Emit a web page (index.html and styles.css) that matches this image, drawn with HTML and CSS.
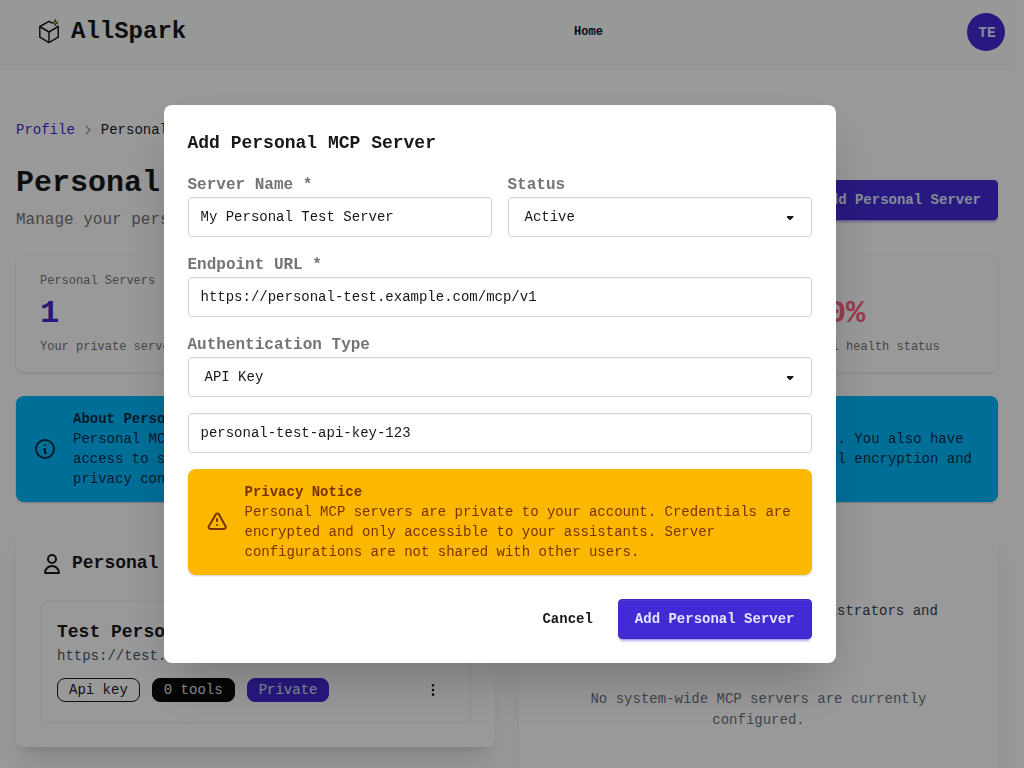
FILE: index.html
```html
<!DOCTYPE html>
<html lang="en">
<head>
<meta charset="utf-8">
<title>AllSpark</title>
<link rel="stylesheet" href="styles.css">
</head>
<body>
<div class="page">
  <header class="navbar">
    <div class="brand">
      <svg class="brand-icon" viewBox="0 0 24 26" fill="none" stroke="#18181b" stroke-width="1.5" stroke-linejoin="round" stroke-linecap="round">
        <path d="M15 4 12 2.4 2.8 7.5v10.7l9.2 5.4 9.2-5.4V7.5l-.6-.4M2.8 7.5 12 13l9.2-5.5M12 13v10.6"/>
        <path d="M18.3 0.9l.8 2 2 .8-2 .8-.8 2.2-.8-2.2-2.2-.8 2.2-.8z" fill="#fbbf24" stroke-width=".8"/>
        <path d="M21.2 1.7l.4-.4" stroke="#f59e0b" stroke-width="1"/>
      </svg>
      <span>AllSpark</span>
    </div>
    <nav class="nav-links"><a>Home</a></nav>
    <div class="nav-end"><div class="avatar">TE</div></div>
  </header>

  <main class="content">
    <div class="breadcrumbs"><a>Profile</a><svg viewBox="0 0 8 10" fill="none" stroke="#18181b" stroke-opacity=".45" stroke-width="1.3"><path d="M2 1 6 5 2 9"/></svg><span>Personal MCP</span></div>

    <div class="page-head">
      <div>
        <h1>Personal MCP</h1>
        <p>Manage your personal MCP servers</p>
      </div>
      <button class="btn btn-primary">Add Personal Server</button>
    </div>

    <div class="stats">
      <div class="stat"><div class="stat-title">Personal Servers</div><div class="stat-value primary">1</div><div class="stat-desc">Your private servers</div></div>
      <div class="stat"><div class="stat-title">System Servers</div><div class="stat-value">0</div><div class="stat-desc">Available to you</div></div>
      <div class="stat"><div class="stat-title">Total Tools</div><div class="stat-value">0</div><div class="stat-desc">Available tools</div></div>
      <div class="stat"><div class="stat-title">Health</div><div class="stat-value error">0.0%</div><div class="stat-desc">Overall health status</div></div>
    </div>

    <div class="alert alert-info">
      <svg viewBox="0 0 24 24" fill="none" stroke="currentColor" stroke-width="2" stroke-linecap="round" stroke-linejoin="round"><path d="M13 16h-1v-4h-1m1-4h.01M21 12a9 9 0 11-18 0 9 9 0 0118 0z"/></svg>
      <div><b>About Personal MCP Servers</b><br>Personal MCP servers are private to your account and can only be invoked by your assistants. You also have<br>access to system-wide servers configured by administrators. All personal servers employ full encryption and<br>privacy controls.</div>
    </div>

    <div class="columns">
      <section class="card">
        <h2><svg viewBox="0 0 24 24" fill="none" stroke="currentColor" stroke-width="2" stroke-linecap="round" stroke-linejoin="round"><path d="M16 7a4 4 0 11-8 0 4 4 0 018 0zM12 14a7 7 0 00-7 7h14a7 7 0 00-7-7z"/></svg><span>Personal Servers</span></h2>
        <div class="server">
          <h3>Test Personal Server</h3>
          <p>https://test.example.com/mcp</p>
          <div class="server-row">
            <div class="badges"><span class="badge outline">Api key</span><span class="badge neutral">0 tools</span><span class="badge private">Private</span></div>
            <div class="menu-btn"><svg viewBox="0 0 24 24" fill="none" stroke="currentColor" stroke-width="2" stroke-linecap="round"><path d="M12 5v.01M12 12v.01M12 19v.01M12 6a1 1 0 110-2 1 1 0 010 2zm0 7a1 1 0 110-2 1 1 0 010 2zm0 7a1 1 0 110-2 1 1 0 010 2z"/></svg></div>
          </div>
        </div>
      </section>
      <section class="card card-system">
        <h2>System Servers</h2>
        <p class="intro">These servers are managed by administrators and available to all users.</p>
        <p class="empty">No system-wide MCP servers are currently configured.</p>
      </section>
    </div>
  </main>
</div>

<div class="modal">
  <div class="modal-box">
    <h3>Add Personal MCP Server</h3>
    <div class="field-row">
      <div class="field"><label>Server Name *</label><div class="input">My Personal Test Server</div></div>
      <div class="field"><label>Status</label><div class="input select">Active</div></div>
    </div>
    <div class="field"><label>Endpoint URL *</label><div class="input">https://personal-test.example.com/mcp/v1</div></div>
    <div class="field"><label>Authentication Type</label><div class="input select">API Key</div></div>
    <div class="field"><div class="input">personal-test-api-key-123</div></div>
    <div class="alert alert-warning">
      <svg viewBox="0 0 24 24" fill="none" stroke="currentColor" stroke-width="2" stroke-linecap="round" stroke-linejoin="round"><path d="M12 9v2m0 4h.01m-6.938 4h13.856c1.54 0 2.502-1.667 1.732-2.5L13.732 4c-.77-.833-1.964-.833-2.732 0L3.732 16.5c-.77.833.192 2.5 1.732 2.5z"/></svg>
      <div><b>Privacy Notice</b><br>Personal MCP servers are private to your account. Credentials are encrypted and only accessible to your assistants. Server configurations are not shared with other users.</div>
    </div>
    <div class="modal-action"><button class="btn btn-ghost">Cancel</button><button class="btn btn-primary">Add Personal Server</button></div>
  </div>
</div>
</body>
</html>
```

FILE: styles.css
```css
* { box-sizing: border-box; margin: 0; padding: 0; }
html, body { height: 768px; overflow: hidden; }
body { font: 16px/24px "Liberation Mono", monospace; color: #18181b; background: #fff; }

.page { display: flex; flex-direction: column; width: 1024px; height: 768px; padding-right: 10px; overflow: hidden; }

.navbar { flex: none; display: grid; grid-template-columns: 1fr auto 1fr; align-items: center; height: 64px; padding: 0 9px 0 37px; background: #fafffd; box-shadow: 0 1px 2px rgba(0,0,0,.05); }
.brand { display: flex; align-items: center; gap: 10px; font-size: 24px; font-weight: 700; line-height: 32px; }
.brand-icon { width: 24px; height: 26px; }
.nav-links { font-size: 12px; font-weight: 700; line-height: 16px; transform: translateX(67.5px); }
.nav-end { display: flex; justify-content: flex-end; }
.avatar { width: 38px; height: 38px; border-radius: 50%; background: #422ad5; color: #e0e7ff; font: 700 14.5px/40px "Liberation Mono", monospace; text-align: center; padding-left: 2px; }

.content { flex: 1; min-height: 0; padding: 56px 16px 0; }
.breadcrumbs { display: flex; align-items: center; font-size: 14px; line-height: 20px; }
.breadcrumbs a { color: #422ad5; }
.breadcrumbs svg { width: 8px; height: 10px; margin: 0 9px; }
.breadcrumbs span { white-space: nowrap; }

.page-head { display: flex; justify-content: space-between; align-items: center; margin-top: 24px; height: 72px; }
.page-head h1 { font-size: 30px; line-height: 36px; }
.page-head p { margin: 7px 0 3px; color: #747476; }

.btn { height: 40px; padding: 0 16px; border: 1px solid transparent; border-radius: 4px; font: 700 14px/20px "Liberation Mono", monospace; }
.btn-primary { background: #422ad5; color: #e0e7ff; border-color: #3e27ca; box-shadow: 0 3px 2px -2px rgba(66,42,213,.3), 0 4px 3px -2px rgba(66,42,213,.3), inset 0 1px 0 rgba(255,255,255,.06); }
.btn-ghost { background: none; color: #18181b; }

.stats { display: grid; grid-template-columns: repeat(4, 1fr); gap: 16px; margin-top: 20px; }
.stat { height: 116px; padding: 17px 24px 0; border-radius: 8px; box-shadow: 0 1px 3px rgba(0,0,0,.1), 0 1px 2px -1px rgba(0,0,0,.1); white-space: nowrap; }
.stat-title, .stat-desc { font-size: 12px; line-height: 16px; color: #747476; }
.stat-value { margin: 7px 0; font-size: 32px; font-weight: 700; line-height: 36px; }
.stat-value.primary { color: #422ad5; }
.stat-value.error { color: #ff627d; }

.alert { display: flex; align-items: center; gap: 16px; height: 106px; padding: 0 16px; border: 1px solid transparent; border-radius: 8px; font-size: 14px; line-height: 20px; }
.alert svg { flex: none; width: 24px; height: 24px; }
.alert-info { margin-top: 24px; background: #00bafe; color: #042e49; white-space: nowrap; box-shadow: 0 1px 2px rgba(0,0,0,.2); }
.alert-warning { background: #fcb700; color: #793205; box-shadow: 0 1px 2px rgba(0,0,0,.2); }

.columns { display: grid; grid-template-columns: 1fr 1fr; gap: 24px; margin-top: 24px; align-items: start; }
.card { height: 221px; padding: 24px; border-radius: 8px; background: #fff; box-shadow: 0 20px 25px -5px rgba(0,0,0,.1), 0 8px 10px -6px rgba(0,0,0,.1); }
.card-system { height: 300px; }
.card h2 { display: flex; align-items: center; gap: 8px; height: 27px; font-size: 18px; line-height: 28px; }
.card h2 svg { width: 24px; height: 24px; }
.card h2 span { padding-bottom: 2px; }
.server { height: 122px; margin-top: 24px; padding: 16px; border: 1px solid #f1f1f1; border-radius: 8px; }
.server h3 { font-size: 18px; line-height: 28px; }
.server p { color: #4a5565; font-size: 14px; line-height: 20px; }
.server-row { display: flex; justify-content: space-between; align-items: center; height: 32px; margin-top: 8px; }
.badges { display: flex; gap: 12px; }
.badge { height: 24px; padding: 0 11px; border: 1px solid #18181b; border-radius: 8px; font-size: 14px; line-height: 22px; }
.badge.neutral { background: #09090b; border-color: #09090b; color: #e4e4e7; }
.badge.private { background: #422ad5; border-color: #422ad5; color: #e0e7ff; }
.menu-btn { display: flex; justify-content: center; width: 42px; }
.menu-btn svg { width: 16px; height: 16px; }
.card .intro { margin-top: 24px; color: #364153; font-size: 14px; line-height: 20px; }
.card .empty { margin-top: 48px; color: #6a7282; font-size: 14px; line-height: 21px; text-align: center; }

.modal { position: fixed; inset: 0; display: flex; align-items: center; justify-content: center; padding-right: 25px; background: rgba(0,0,0,.4); }
.modal-box { width: 672px; height: 558px; padding: 24px; border-radius: 8px; background: #fff; box-shadow: 0 25px 50px -12px rgba(0,0,0,.25); }
.modal-box h3 { margin-bottom: 16px; font-size: 18px; line-height: 28px; }
.field-row { display: grid; grid-template-columns: 1fr 1fr; gap: 16px; }
.field { margin-bottom: 16px; }
.field label { display: block; color: #747476; font-weight: 700; }
.input { height: 40px; padding: 0 12px; border: 1px solid #d1d1d1; border-radius: 4px; font-size: 14px; line-height: 38px; box-shadow: inset 0 1px #f8f8f8; }
.select { display: flex; align-items: center; justify-content: space-between; padding: 0 17px 0 16px; }
.select::after { content: ""; width: 7px; height: 4px; margin-top: 2px; background: currentColor; clip-path: polygon(0 0, 100% 0, 100% 25%, 57% 100%, 43% 100%, 0 25%); }
.modal-action { display: flex; justify-content: flex-end; gap: 8px; margin-top: 24px; }
```
